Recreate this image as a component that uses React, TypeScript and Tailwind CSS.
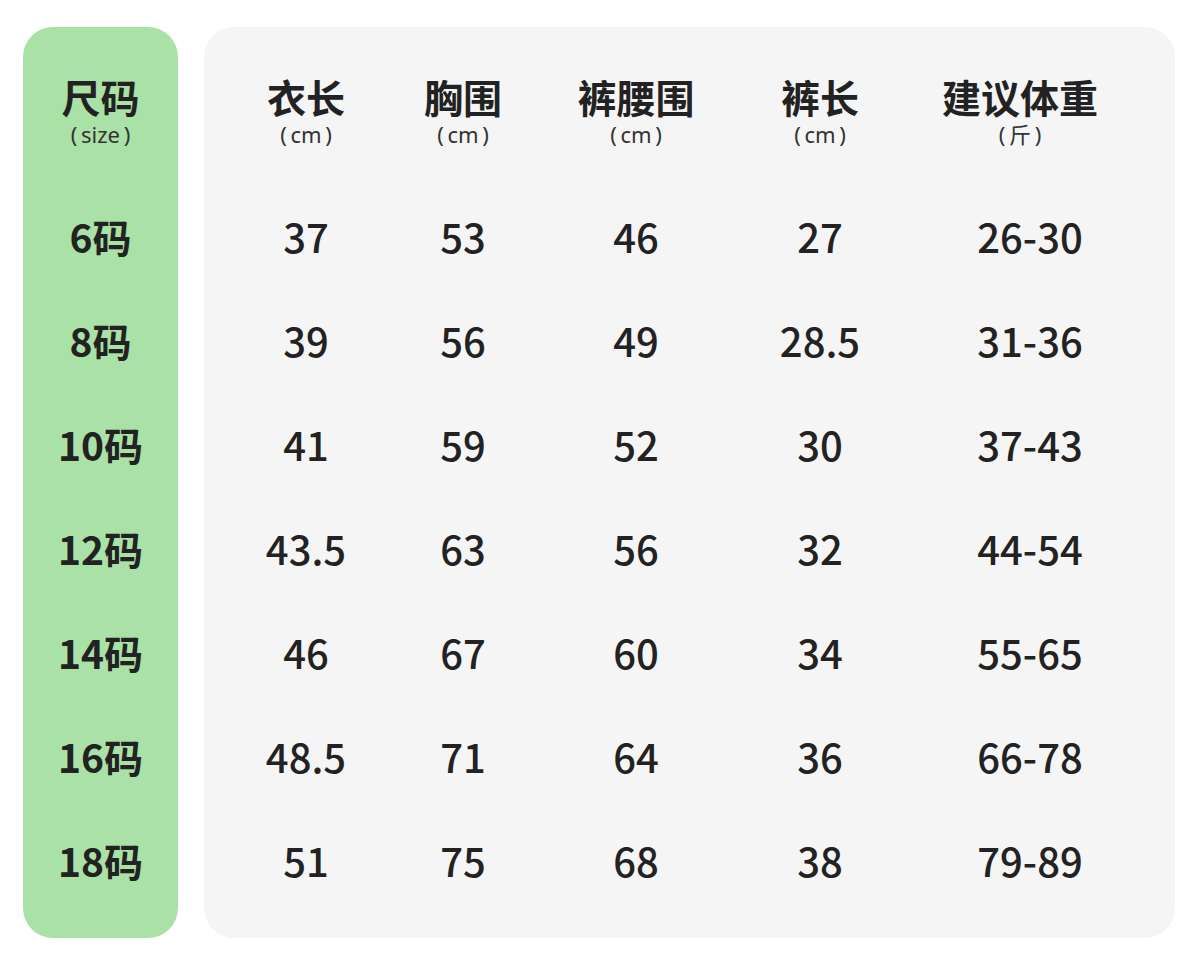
const headers = [
  { title: "衣长", unit: "cm", shift: "" },
  { title: "胸围", unit: "cm", shift: "" },
  { title: "裤腰围", unit: "cm", shift: "" },
  { title: "裤长", unit: "cm", shift: "" },
  { title: "建议体重", unit: "斤", shift: "pr-[20px]" },
];

const rows = [
  { size: "6码", values: ["37", "53", "46", "27", "26-30"] },
  { size: "8码", values: ["39", "56", "49", "28.5", "31-36"] },
  { size: "10码", values: ["41", "59", "52", "30", "37-43"] },
  { size: "12码", values: ["43.5", "63", "56", "32", "44-54"] },
  { size: "14码", values: ["46", "67", "60", "34", "55-65"] },
  { size: "16码", values: ["48.5", "71", "64", "36", "66-78"] },
  { size: "18码", values: ["51", "75", "68", "38", "79-89"] },
];

const grid = "grid grid-cols-[204px_110px_236px_132px_288px]";

function Unit({ text }: { text: string }) {
  return (
    <div
      className="mt-[5px] h-[26px] whitespace-pre text-[22px] leading-[26px] text-[#333]"
      style={{ fontFamily: '"Noto Sans", "Noto Sans CJK SC", sans-serif' }}
    >
      {`(\u2009${text}\u2009)`}
    </div>
  );
}

export default function App() {
  return (
    <div
      className="flex h-[968px] w-[1200px] gap-[26px] bg-white pl-[23px] pt-[27px] text-[#222]"
      style={{ fontFamily: '"Noto Sans CJK SC", "Noto Sans", sans-serif' }}
    >
      <div className="flex h-[911px] w-[155px] flex-col items-center rounded-[30px] bg-[#a9e1a6] pt-[49px]">
        <div className="h-[40px] text-[39px] font-bold leading-[40px]">尺码</div>
        <Unit text="size" />
        <div className="mt-[37px] flex flex-col">
          {rows.map((r) => (
            <div
              key={r.size}
              className="flex h-[104px] items-center justify-center text-[39px] font-bold"
            >
              {r.size}
            </div>
          ))}
        </div>
      </div>

      <div className="h-[911px] w-[971px] rounded-[30px] bg-[#f5f5f5] pt-[49px]">
        <div className={grid}>
          {headers.map((h) => (
            <div key={h.title} className={`flex flex-col items-center ${h.shift}`}>
              <div className="h-[40px] text-[39px] font-bold leading-[40px]">{h.title}</div>
              <Unit text={h.unit} />
            </div>
          ))}
        </div>
        <div className="mt-[37px]">
          {rows.map((r) => (
            <div key={r.size} className={`${grid} h-[104px] items-center`}>
              {r.values.map((v, i) => (
                <div key={i} className="text-center text-[40px] font-medium">
                  {v}
                </div>
              ))}
            </div>
          ))}
        </div>
      </div>
    </div>
  );
}
